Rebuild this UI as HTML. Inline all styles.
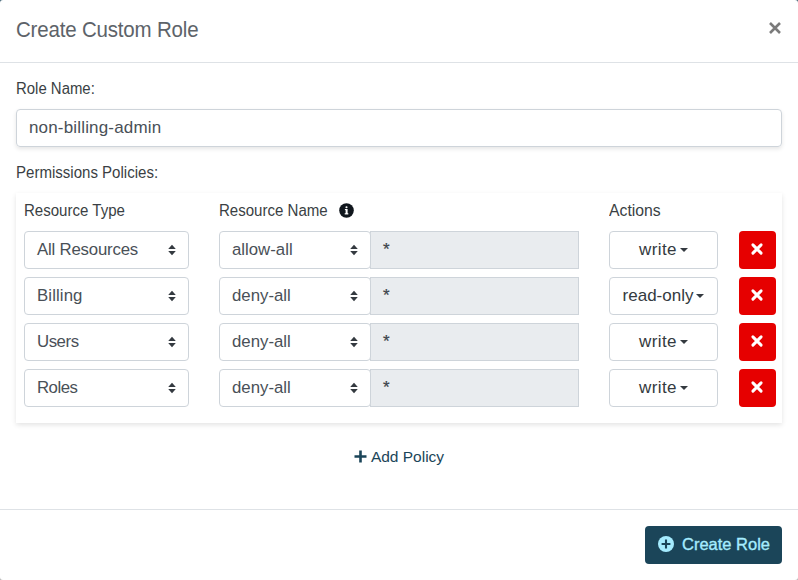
<!DOCTYPE html>
<html><head><meta charset="utf-8"><title>Create Custom Role</title>
<style>
*{box-sizing:border-box}
html,body{margin:0;padding:0}
body{width:798px;height:580px;overflow:hidden;background:linear-gradient(#4a6b7b 0,#4a6b7b 50%,#b8b8b8 50%,#b8b8b8 100%);font-family:"Liberation Sans",Arial,sans-serif;color:#3a3f44;font-size:16px;position:relative}
.modal{position:absolute;left:0;top:0;width:798px;height:580px;background:#fff;border-radius:3px}
.abs{position:absolute}
.title{left:16px;top:16.8px;font-size:22.2px;line-height:26px;color:#5d6369;letter-spacing:-0.2px;transform-origin:0 50%;transform:scaleX(.924);white-space:nowrap}
.close{left:767px;top:17px;width:16px;height:22px}
.hr{left:0;width:798px;height:1px;background:#dee2e6}
.lbl{font-size:16px;line-height:20px;color:#3a3f44;transform-origin:0 50%;transform:scaleX(.94);white-space:nowrap}
.input{left:16px;top:109px;width:766px;height:38px;border:1px solid #ced4da;border-radius:4px;box-shadow:0 2px 4px rgba(0,0,0,.1);padding:7.4px 12px;font-size:17px;letter-spacing:.17px;line-height:22px;color:#495057}
.card{left:16px;top:193px;width:766px;height:230px;background:#fff;box-shadow:0 2px 5px rgba(0,0,0,.11)}
.sel{height:38px;border:1px solid #ced4da;border-radius:4px;background:#fff;font-size:16.8px;line-height:22px;color:#495057;padding:6.5px 12px;z-index:2}
.sel svg{position:absolute;right:12px;top:12px}
.dis{height:38px;border:1px solid #ced4da;background:#e9ecef;font-size:17px;line-height:22px;color:#3d444b;padding:6.8px 12px;-webkit-text-stroke:.25px #3d444b}
.act{height:38px;border:1px solid #ced4da;border-radius:4px;background:#fff;font-size:17px;line-height:22px;color:#343a40;text-align:center;padding:6.5px 0}
.caret{display:inline-block;width:0;height:0;border-left:4px solid transparent;border-right:4px solid transparent;border-top:4px solid #343a40;vertical-align:3px;margin-left:3px}
.del{width:37px;height:38px;background:#e60000;border-radius:4px}
.del svg{position:absolute;left:11.2px;top:11px}
.add{left:0;width:798px;top:446px;text-align:center;font-size:15.5px;line-height:22px;color:#1b4559}
.btn{left:645px;top:526px;width:137px;height:38px;background:#1b4559;border-radius:4px;color:#a5ecff;font-size:16.5px;line-height:22px;padding:6.5px 0 0 37px;-webkit-text-stroke:.35px #a5ecff}
</style></head><body>
<div class="modal">
<div class="abs title">Create Custom Role</div>
<svg class="abs close" viewBox="0 0 16 22"><path d="M3 6 L13 16 M13 6 L3 16" stroke="#7b7b7b" stroke-width="2.6" fill="none"/></svg>
<div class="abs hr" style="top:62px"></div>
<div class="abs lbl" style="left:16px;top:79px;transform:scaleX(.933)">Role Name:</div>
<div class="abs input">non-billing-admin</div>
<div class="abs lbl" style="left:16px;top:163px">Permissions Policies:</div>
<div class="abs card"></div>
<div class="abs lbl" style="left:24px;top:201px">Resource Type</div>
<div class="abs lbl" style="left:219px;top:201px">Resource Name</div>
<svg class="abs" style="left:339.1px;top:202.6px" width="15" height="15" viewBox="0 0 15 15"><circle cx="7.5" cy="7.5" r="7.3" fill="#10161d"/><rect x="6.6" y="6" width="2" height="5" fill="#fff"/><rect x="5.9" y="6" width="1.5" height="1.1" fill="#fff"/><rect x="5.7" y="10.2" width="3.6" height="1.25" fill="#fff"/><circle cx="7.5" cy="4.2" r="1.05" fill="#fff"/></svg>
<div class="abs lbl" style="left:609px;top:201px;transform:scaleX(.985)">Actions</div>

<!-- rows -->
<div class="abs sel" style="left:24px;top:231px;width:165px"><span style="letter-spacing:-.19px">All Resources</span><svg width="8" height="12" viewBox="0 0 8 12"><path d="M4 0.8 L7.8 5 H0.2Z M4 11.2 L7.8 7 H0.2Z" fill="#343a40"/></svg></div>
<div class="abs sel" style="left:219px;top:231px;width:152px">allow-all<svg width="8" height="12" viewBox="0 0 8 12"><path d="M4 0.8 L7.8 5 H0.2Z M4 11.2 L7.8 7 H0.2Z" fill="#343a40"/></svg></div>
<div class="abs dis" style="left:370px;top:231px;width:209px">*</div>
<div class="abs act" style="left:609px;top:231px;width:109px"><span style="letter-spacing:.4px">write</span><span class="caret"></span></div>
<div class="abs del" style="left:739px;top:231px"><svg width="14" height="14" viewBox="0 0 14 14"><path d="M2.9 2.9 L11.1 11.1 M11.1 2.9 L2.9 11.1" stroke="#fff" stroke-width="3" stroke-linecap="round" fill="none"/></svg></div>

<div class="abs sel" style="left:24px;top:277px;width:165px"><span style="letter-spacing:.11px">Billing</span><svg width="8" height="12" viewBox="0 0 8 12"><path d="M4 0.8 L7.8 5 H0.2Z M4 11.2 L7.8 7 H0.2Z" fill="#343a40"/></svg></div>
<div class="abs sel" style="left:219px;top:277px;width:152px">deny-all<svg width="8" height="12" viewBox="0 0 8 12"><path d="M4 0.8 L7.8 5 H0.2Z M4 11.2 L7.8 7 H0.2Z" fill="#343a40"/></svg></div>
<div class="abs dis" style="left:370px;top:277px;width:209px">*</div>
<div class="abs act" style="left:609px;top:277px;width:109px">read-only<span class="caret"></span></div>
<div class="abs del" style="left:739px;top:277px"><svg width="14" height="14" viewBox="0 0 14 14"><path d="M2.9 2.9 L11.1 11.1 M11.1 2.9 L2.9 11.1" stroke="#fff" stroke-width="3" stroke-linecap="round" fill="none"/></svg></div>

<div class="abs sel" style="left:24px;top:323px;width:165px"><span style="letter-spacing:-.45px">Users</span><svg width="8" height="12" viewBox="0 0 8 12"><path d="M4 0.8 L7.8 5 H0.2Z M4 11.2 L7.8 7 H0.2Z" fill="#343a40"/></svg></div>
<div class="abs sel" style="left:219px;top:323px;width:152px">deny-all<svg width="8" height="12" viewBox="0 0 8 12"><path d="M4 0.8 L7.8 5 H0.2Z M4 11.2 L7.8 7 H0.2Z" fill="#343a40"/></svg></div>
<div class="abs dis" style="left:370px;top:323px;width:209px">*</div>
<div class="abs act" style="left:609px;top:323px;width:109px"><span style="letter-spacing:.4px">write</span><span class="caret"></span></div>
<div class="abs del" style="left:739px;top:323px"><svg width="14" height="14" viewBox="0 0 14 14"><path d="M2.9 2.9 L11.1 11.1 M11.1 2.9 L2.9 11.1" stroke="#fff" stroke-width="3" stroke-linecap="round" fill="none"/></svg></div>

<div class="abs sel" style="left:24px;top:369px;width:165px"><span style="letter-spacing:-.5px">Roles</span><svg width="8" height="12" viewBox="0 0 8 12"><path d="M4 0.8 L7.8 5 H0.2Z M4 11.2 L7.8 7 H0.2Z" fill="#343a40"/></svg></div>
<div class="abs sel" style="left:219px;top:369px;width:152px">deny-all<svg width="8" height="12" viewBox="0 0 8 12"><path d="M4 0.8 L7.8 5 H0.2Z M4 11.2 L7.8 7 H0.2Z" fill="#343a40"/></svg></div>
<div class="abs dis" style="left:370px;top:369px;width:209px">*</div>
<div class="abs act" style="left:609px;top:369px;width:109px"><span style="letter-spacing:.4px">write</span><span class="caret"></span></div>
<div class="abs del" style="left:739px;top:369px"><svg width="14" height="14" viewBox="0 0 14 14"><path d="M2.9 2.9 L11.1 11.1 M11.1 2.9 L2.9 11.1" stroke="#fff" stroke-width="3" stroke-linecap="round" fill="none"/></svg></div>

<div class="abs add"><svg width="13" height="13" viewBox="0 0 13 13" style="vertical-align:-1px;margin-right:4px"><path d="M6.5 0.5 V12.5 M0.5 6.5 H12.5" stroke="#1b4559" stroke-width="2.6" fill="none"/></svg>Add Policy</div>
<div class="abs hr" style="top:509px"></div>
<div class="abs btn">Create Role<svg class="abs" style="left:12.5px;top:10px" width="16" height="16" viewBox="0 0 16 16"><circle cx="8" cy="8" r="8" fill="#a5ecff"/><path d="M8 3.6 V12.4 M3.6 8 H12.4" stroke="#1b4559" stroke-width="2.1" fill="none"/></svg></div>
</div>
</body></html>
